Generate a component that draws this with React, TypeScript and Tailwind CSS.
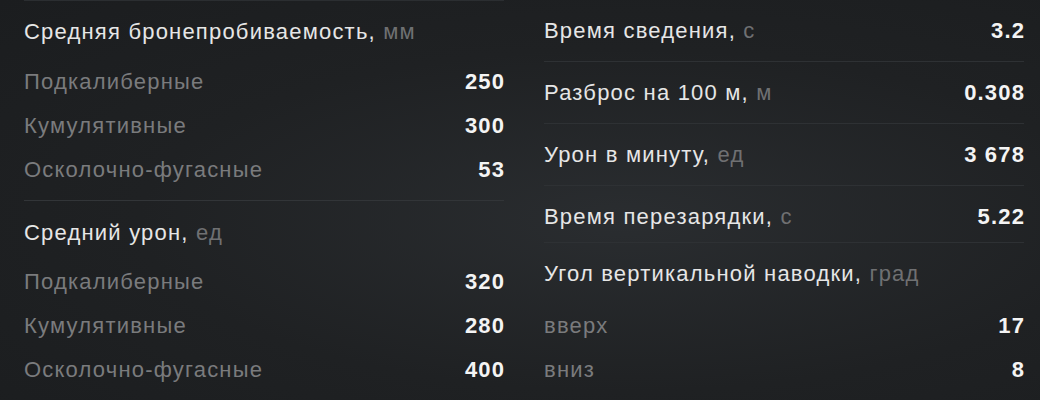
import React from 'react';

// =================================================================
// TANK GUN STATS PANEL
// =================================================================

type Row = { label: string; value: string };

const font = { fontFamily: '"Liberation Sans", Arial, sans-serif' };

const penetration: Row[] = [
  { label: 'Подкалиберные', value: '250' },
  { label: 'Кумулятивные', value: '300' },
  { label: 'Осколочно-фугасные', value: '53' },
];

const damage: Row[] = [
  { label: 'Подкалиберные', value: '320' },
  { label: 'Кумулятивные', value: '280' },
  { label: 'Осколочно-фугасные', value: '400' },
];

const mainStats = [
  { label: 'Время сведения', unit: 'с', value: '3.2' },
  { label: 'Разброс на 100 м', unit: 'м', value: '0.308' },
  { label: 'Урон в минуту', unit: 'ед', value: '3 678' },
];

function Title({ label, unit }: { label: string; unit: string }) {
  return (
    <div className="text-[22px] leading-[24px] tracking-[1.2px] text-[#e6e6e6]">
      {label}, <span className="text-[#6f7072]">{unit}</span>
    </div>
  );
}

function Value({ children }: { children: React.ReactNode }) {
  return (
    <span className="font-bold text-[22px] leading-[24px] tracking-[1.2px] mr-[-1.2px] text-[#f4f4f4]">
      {children}
    </span>
  );
}

function SubRow({ row }: { row: Row }) {
  return (
    <div className="flex items-center justify-between h-[44px]">
      <span className="text-[22px] leading-[24px] tracking-[1.2px] text-[#7a7b7d]">{row.label}</span>
      <Value>{row.value}</Value>
    </div>
  );
}

function App() {
  return (
    <div
      className="w-[1040px] h-[400px] overflow-hidden bg-[radial-gradient(ellipse_at_60%_55%,#2a2d30_0%,#1f2123_55%,#1b1d1f_100%)] antialiased"
      style={font}
    >
      <div className="grid grid-cols-[480px_480px] gap-x-[40px] pl-[24px]">
        {/* Left column */}
        <div className="flex flex-col">
          <div className="border-t border-[#2b2e31] pt-[19px] pb-[16px]">
            <Title label="Средняя бронепробиваемость" unit="мм" />
          </div>
          {penetration.map((r) => (
            <SubRow key={'p' + r.label} row={r} />
          ))}
          <div className="border-t border-[#323538] mt-[8px] pt-[20px] pb-[15px]">
            <Title label="Средний урон" unit="ед" />
          </div>
          {damage.map((r) => (
            <SubRow key={'d' + r.label} row={r} />
          ))}
        </div>

        {/* Right column */}
        <div className="flex flex-col">
          {mainStats.map((s) => (
            <div
              key={s.label}
              className="flex items-center justify-between h-[62px] border-b border-[#2e3134]"
            >
              <Title label={s.label} unit={s.unit} />
              <Value>{s.value}</Value>
            </div>
          ))}
          <div className="flex items-center justify-between h-[57px] pt-[5px] border-b border-[#2e3134]">
            <Title label="Время перезарядки" unit="с" />
            <Value>5.22</Value>
          </div>
          <div className="pt-[19px] pb-[18px]">
            <Title label="Угол вертикальной наводки" unit="град" />
          </div>
          <SubRow row={{ label: 'вверх', value: '17' }} />
          <SubRow row={{ label: 'вниз', value: '8' }} />
        </div>
      </div>
    </div>
  );
}

export default App;
